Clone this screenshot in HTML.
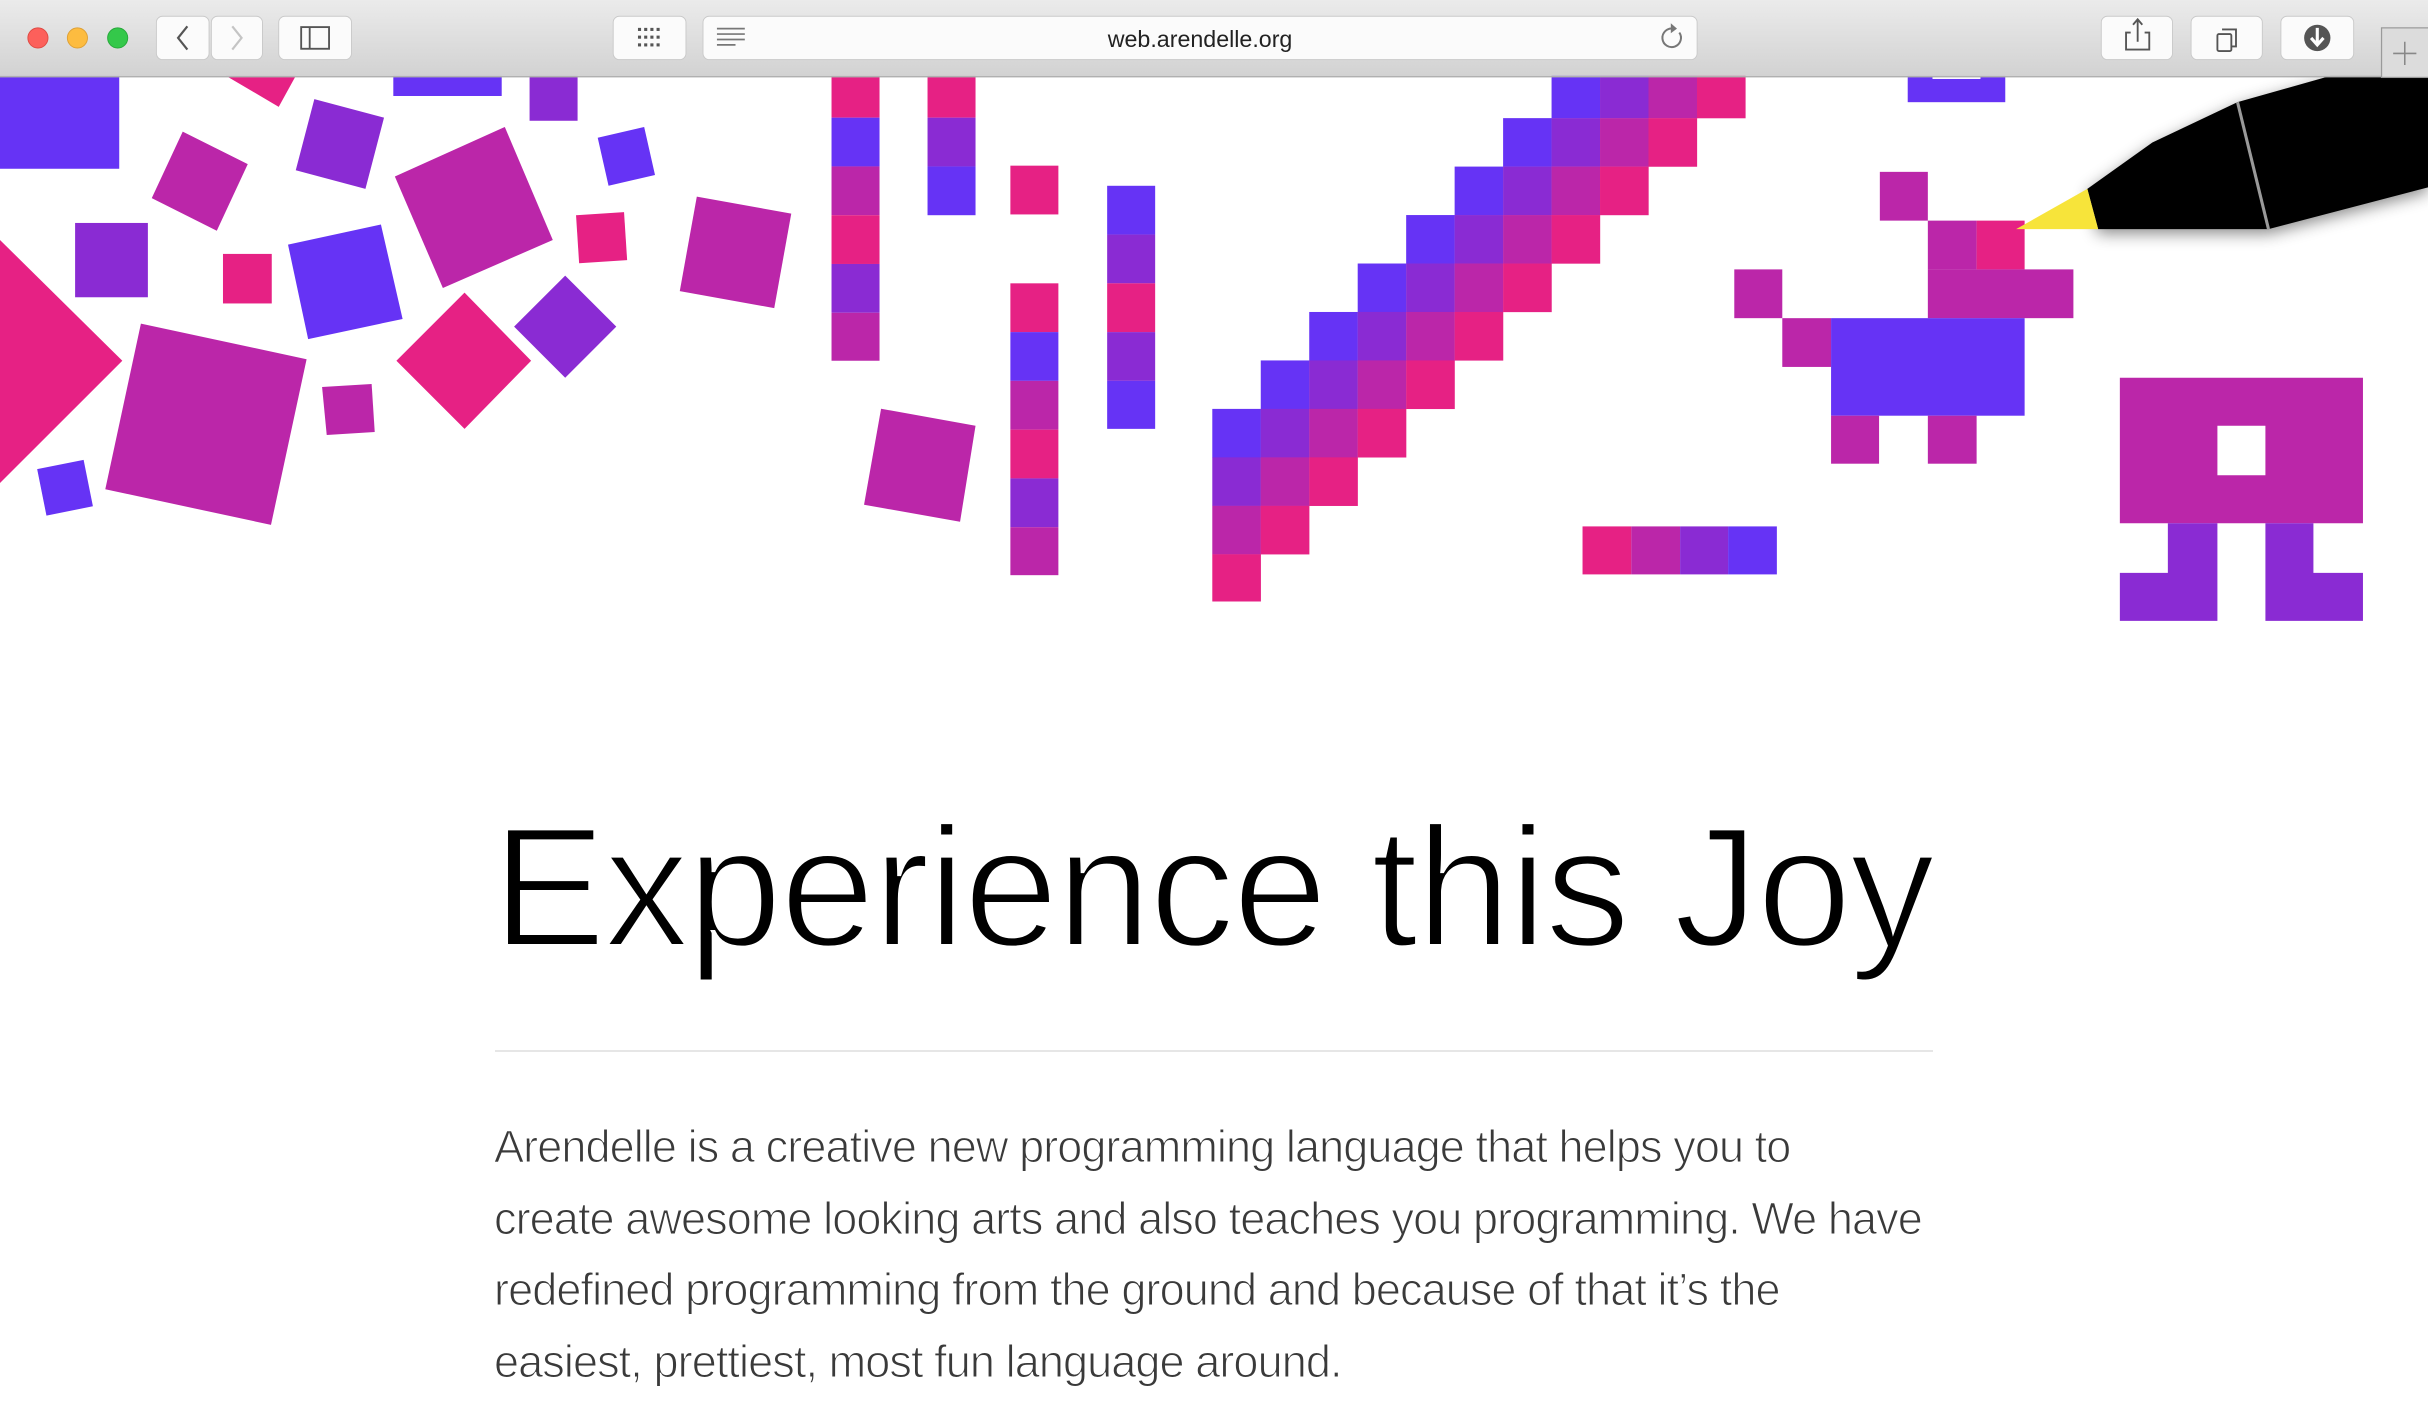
<!DOCTYPE html>
<html><head><meta charset="utf-8">
<style>
html,body{margin:0;padding:0;background:#fff;}
body{width:2428px;height:1412px;position:relative;overflow:hidden;font-family:"Liberation Sans",sans-serif;}
svg.art{position:absolute;left:0;top:0;width:2428px;height:1412px;}
.title{position:absolute;left:492px;top:802px;font-size:171px;line-height:1;letter-spacing:-2.2px;color:#000;white-space:nowrap;-webkit-text-stroke:4px #fff;}
.rule{position:absolute;left:495px;top:1050px;width:1438px;height:2px;background:#e6e6e6;}
.para{position:absolute;left:494px;top:1111px;font-size:45px;line-height:71.7px;letter-spacing:-0.9px;color:#3a3a3a;white-space:nowrap;-webkit-text-stroke:1.1px #fff;}
</style></head><body>
<svg class="art" viewBox="0 0 1568 912" preserveAspectRatio="none" xmlns="http://www.w3.org/2000/svg">
<defs>
<linearGradient id="tb" x1="0" y1="0" x2="0" y2="1"><stop offset="0" stop-color="#ebebeb"/><stop offset="1" stop-color="#d2d2d2"/></linearGradient>
<filter id="sh" x="-20%" y="-20%" width="140%" height="160%"><feDropShadow dx="0" dy="3" stdDeviation="5" flood-color="#000" flood-opacity="0.45"/></filter>
</defs>
<g>
<rect x="0" y="49" width="77" height="60" fill="#6633f5"/>
<polygon points="146,49 191,49 180,69" fill="#e62184"/>
<rect x="254" y="49" width="70" height="13" fill="#6633f5"/>
<rect x="342" y="49" width="31" height="29" fill="#8a2bd3"/>
<polygon points="118,85 160,106 140,149 98,128" fill="#bb26a9"/>
<polygon points="203,64 248,76 236,122 191,110" fill="#8a2bd3"/>
<polygon points="326,82 357,155 286,186 255,114" fill="#bb26a9"/>
<polygon points="416,82 423,113 393,120 386,89" fill="#6633f5"/>
<rect x="48.5" y="144" width="47" height="48" fill="#8a2bd3"/>
<rect x="144" y="164" width="31.5" height="32" fill="#e62184"/>
<polygon points="246,145 260,206 199,219 186,158" fill="#6633f5"/>
<polygon points="372,139 403,137 405,168 374,170" fill="#e62184"/>
<polygon points="450,127 511,138 500,199 439,188" fill="#bb26a9"/>
<polygon points="0,155 79,233 0,312" fill="#e62184"/>
<polygon points="91,209 198,232 175,339 68,316" fill="#bb26a9"/>
<polygon points="208,250 240,248 242,279 211,281" fill="#bb26a9"/>
<polygon points="300,189 343,233 300,277 256,233" fill="#e62184"/>
<polygon points="365,178 398,211 365,244 332,211" fill="#8a2bd3"/>
<polygon points="24,303 54,297 60,327 30,333" fill="#6633f5"/>
<polygon points="569,264 630,275 620,337 558,326" fill="#bb26a9"/>
<rect x="537" y="49" width="31" height="27" fill="#e62184"/>
<rect x="537" y="76" width="31" height="31.5" fill="#6633f5"/>
<rect x="537" y="107.5" width="31" height="31.5" fill="#bb26a9"/>
<rect x="537" y="139" width="31" height="31.5" fill="#e62184"/>
<rect x="537" y="170.5" width="31" height="31.5" fill="#8a2bd3"/>
<rect x="537" y="202" width="31" height="31" fill="#bb26a9"/>
<rect x="599" y="49" width="31" height="27" fill="#e62184"/>
<rect x="599" y="76" width="31" height="31.5" fill="#8a2bd3"/>
<rect x="599" y="107.5" width="31" height="31.5" fill="#6633f5"/>
<rect x="652.5" y="107" width="31" height="31.5" fill="#e62184"/>
<rect x="652.5" y="183" width="31" height="31.5" fill="#e62184"/>
<rect x="652.5" y="214.5" width="31" height="31.5" fill="#6633f5"/>
<rect x="652.5" y="246" width="31" height="31.5" fill="#bb26a9"/>
<rect x="652.5" y="277.5" width="31" height="31.5" fill="#e62184"/>
<rect x="652.5" y="309" width="31" height="31.5" fill="#8a2bd3"/>
<rect x="652.5" y="340.5" width="31" height="31" fill="#bb26a9"/>
<rect x="715" y="120" width="31" height="31.5" fill="#6633f5"/>
<rect x="715" y="151.5" width="31" height="31.5" fill="#8a2bd3"/>
<rect x="715" y="183" width="31" height="31.5" fill="#e62184"/>
<rect x="715" y="214.5" width="31" height="31.5" fill="#8a2bd3"/>
<rect x="715" y="246" width="31" height="31" fill="#6633f5"/>
<g>
<rect x="1002" y="45" width="31.4" height="31.4" fill="#6633f5"/><rect x="1033.3" y="45" width="31.4" height="31.4" fill="#8a2bd3"/><rect x="1064.6" y="45" width="31.4" height="31.4" fill="#bb26a9"/><rect x="1095.9" y="45" width="31.4" height="31.4" fill="#e62184"/>
<rect x="970.7" y="76.3" width="31.4" height="31.4" fill="#6633f5"/><rect x="1002" y="76.3" width="31.4" height="31.4" fill="#8a2bd3"/><rect x="1033.3" y="76.3" width="31.4" height="31.4" fill="#bb26a9"/><rect x="1064.6" y="76.3" width="31.4" height="31.4" fill="#e62184"/>
<rect x="939.4" y="107.6" width="31.4" height="31.4" fill="#6633f5"/><rect x="970.7" y="107.6" width="31.4" height="31.4" fill="#8a2bd3"/><rect x="1002" y="107.6" width="31.4" height="31.4" fill="#bb26a9"/><rect x="1033.3" y="107.6" width="31.4" height="31.4" fill="#e62184"/>
<rect x="908.1" y="138.9" width="31.4" height="31.4" fill="#6633f5"/><rect x="939.4" y="138.9" width="31.4" height="31.4" fill="#8a2bd3"/><rect x="970.7" y="138.9" width="31.4" height="31.4" fill="#bb26a9"/><rect x="1002" y="138.9" width="31.4" height="31.4" fill="#e62184"/>
<rect x="876.8" y="170.2" width="31.4" height="31.4" fill="#6633f5"/><rect x="908.1" y="170.2" width="31.4" height="31.4" fill="#8a2bd3"/><rect x="939.4" y="170.2" width="31.4" height="31.4" fill="#bb26a9"/><rect x="970.7" y="170.2" width="31.4" height="31.4" fill="#e62184"/>
<rect x="845.5" y="201.5" width="31.4" height="31.4" fill="#6633f5"/><rect x="876.8" y="201.5" width="31.4" height="31.4" fill="#8a2bd3"/><rect x="908.1" y="201.5" width="31.4" height="31.4" fill="#bb26a9"/><rect x="939.4" y="201.5" width="31.4" height="31.4" fill="#e62184"/>
<rect x="814.2" y="232.8" width="31.4" height="31.4" fill="#6633f5"/><rect x="845.5" y="232.8" width="31.4" height="31.4" fill="#8a2bd3"/><rect x="876.8" y="232.8" width="31.4" height="31.4" fill="#bb26a9"/><rect x="908.1" y="232.8" width="31.4" height="31.4" fill="#e62184"/>
<rect x="782.9" y="264.1" width="31.4" height="31.4" fill="#6633f5"/><rect x="814.2" y="264.1" width="31.4" height="31.4" fill="#8a2bd3"/><rect x="845.5" y="264.1" width="31.4" height="31.4" fill="#bb26a9"/><rect x="876.8" y="264.1" width="31.4" height="31.4" fill="#e62184"/>
<rect x="782.9" y="295.4" width="31.4" height="31.4" fill="#8a2bd3"/><rect x="814.2" y="295.4" width="31.4" height="31.4" fill="#bb26a9"/><rect x="845.5" y="295.4" width="31.4" height="31.4" fill="#e62184"/>
<rect x="782.9" y="326.7" width="31.4" height="31.4" fill="#bb26a9"/><rect x="814.2" y="326.7" width="31.4" height="31.4" fill="#e62184"/>
<rect x="782.9" y="358" width="31.4" height="30.5" fill="#e62184"/>
</g>
<rect x="1232" y="49" width="63" height="17" fill="#6633f5"/>
<rect x="1248" y="49" width="31" height="2" fill="#fff"/>
<rect x="1214" y="111" width="31" height="31.5" fill="#bb26a9"/>
<rect x="1245" y="142.5" width="31.5" height="31.5" fill="#bb26a9"/>
<rect x="1276.5" y="142.5" width="31" height="31.5" fill="#e62184"/>
<rect x="1245" y="174" width="94" height="31.5" fill="#bb26a9"/>
<rect x="1120" y="174" width="31" height="31.5" fill="#bb26a9"/>
<rect x="1151" y="205.5" width="31.5" height="31.5" fill="#bb26a9"/>
<rect x="1182.5" y="205.5" width="125" height="63" fill="#6633f5"/>
<rect x="1182.5" y="268.5" width="31" height="31" fill="#bb26a9"/>
<rect x="1245" y="268.5" width="31.5" height="31" fill="#bb26a9"/>
<rect x="1022" y="340" width="31.5" height="31" fill="#e62184"/>
<rect x="1053.5" y="340" width="31.5" height="31" fill="#bb26a9"/>
<rect x="1085" y="340" width="31" height="31" fill="#8a2bd3"/>
<rect x="1116" y="340" width="31.5" height="31" fill="#6633f5"/>
<path d="M1369 244h157v94h-157z M1432 275v32h31v-32z" fill="#bb26a9" fill-rule="evenodd"/>
<path d="M1400 338h32v63h-63v-31h31z M1463 338h31v32h32v31h-63z" fill="#8a2bd3"/>
<g filter="url(#sh)">
<polygon points="1348,122 1390,92 1445,66 1505,49 1568,49 1568,121 1465,148 1355,148" fill="#050505"/>
</g>
<polygon points="1302,148 1348,122 1355,148" fill="#f7e43a"/>
<line x1="1445" y1="66" x2="1465" y2="148" stroke="#9a9a9a" stroke-width="2"/>
</g>
<rect x="0" y="0" width="1568" height="49" fill="url(#tb)"/>
<rect x="0" y="49" width="1568" height="1" fill="#b0b0b0"/>
<circle cx="24.5" cy="24.5" r="6.5" fill="#fc605b" stroke="#de4a43" stroke-width="0.6"/>
<circle cx="50" cy="24.5" r="6.5" fill="#fdbc40" stroke="#dea035" stroke-width="0.6"/>
<circle cx="76" cy="24.5" r="6.5" fill="#34c84a" stroke="#27a83a" stroke-width="0.6"/>
<g fill="#fbfbfb" stroke="#c9c9c9" stroke-width="0.6">
<rect x="101" y="10.5" width="34" height="28" rx="4"/>
<rect x="136.5" y="10.5" width="33" height="28" rx="4"/>
<rect x="180" y="10.5" width="47" height="28" rx="4"/>
<rect x="396" y="10.5" width="47" height="28" rx="4"/>
<rect x="454" y="10.5" width="642" height="28" rx="4"/>
<rect x="1357" y="10.5" width="46" height="28" rx="4"/>
<rect x="1415" y="10.5" width="46" height="28" rx="4"/>
<rect x="1473" y="10.5" width="47" height="28" rx="4"/>
</g>
<path d="M121 17l-6 7.5 6 7.5" fill="none" stroke="#555" stroke-width="1.4"/>
<path d="M150 17l6 7.5-6 7.5" fill="none" stroke="#c4c4c4" stroke-width="1.4"/>
<rect x="194.5" y="17.5" width="18" height="14" fill="none" stroke="#555" stroke-width="1.2"/>
<line x1="200" y1="17.5" x2="200" y2="31.5" stroke="#555" stroke-width="1.2"/>
<g fill="#555">
<rect x="412" y="18" width="2" height="2"/><rect x="416" y="18" width="2" height="2"/><rect x="420" y="18" width="2" height="2"/><rect x="424" y="18" width="2" height="2"/>
<rect x="412" y="23" width="2" height="2"/><rect x="416" y="23" width="2" height="2"/><rect x="420" y="23" width="2" height="2"/><rect x="424" y="23" width="2" height="2"/>
<rect x="412" y="28" width="2" height="2"/><rect x="416" y="28" width="2" height="2"/><rect x="420" y="28" width="2" height="2"/><rect x="424" y="28" width="2" height="2"/>
</g>
<g stroke="#777" stroke-width="1.1"><line x1="463" y1="18.5" x2="481" y2="18.5"/><line x1="463" y1="22" x2="481" y2="22"/><line x1="463" y1="25.5" x2="481" y2="25.5"/><line x1="463" y1="29" x2="475" y2="29"/></g>
<text x="775" y="30.5" text-anchor="middle" font-family="Liberation Sans, sans-serif" font-size="15" fill="#222">web.arendelle.org</text>
<path d="M1080.5 18.5a6 6 0 1 0 4 2.5" fill="none" stroke="#777" stroke-width="1.3"/>
<path d="M1079 15l4 3.5-4 3z" fill="#777"/>
<path d="M1376 21h-3v11h15v-11h-3 M1380.5 27v-14 M1377.5 16l3-3.5 3 3.5" fill="none" stroke="#555" stroke-width="1.2"/>
<rect x="1432" y="22" width="9" height="11" rx="1" fill="none" stroke="#555" stroke-width="1.2"/>
<path d="M1435 19h9v11h-3" fill="none" stroke="#555" stroke-width="1.2"/>
<circle cx="1496.5" cy="24.5" r="8.5" fill="#555"/>
<path d="M1496.5 18v10 M1492.5 24.5l4 4.5 4-4.5" fill="none" stroke="#fff" stroke-width="2"/>
<rect x="1538" y="18" width="31" height="32" fill="#dcdcdc" stroke="#9a9a9a" stroke-width="0.8"/>
<path d="M1553 27v15 M1545.5 34.5h15" stroke="#888" stroke-width="1"/>
</svg>
<div class="title">Experience this Joy</div>
<div class="rule"></div>
<div class="para">Arendelle is a creative new programming language that helps you to<br>create awesome looking arts and also teaches you programming. We have<br>redefined programming from the ground and because of that it’s the<br>easiest, prettiest, most fun language around.</div>
</body></html>
